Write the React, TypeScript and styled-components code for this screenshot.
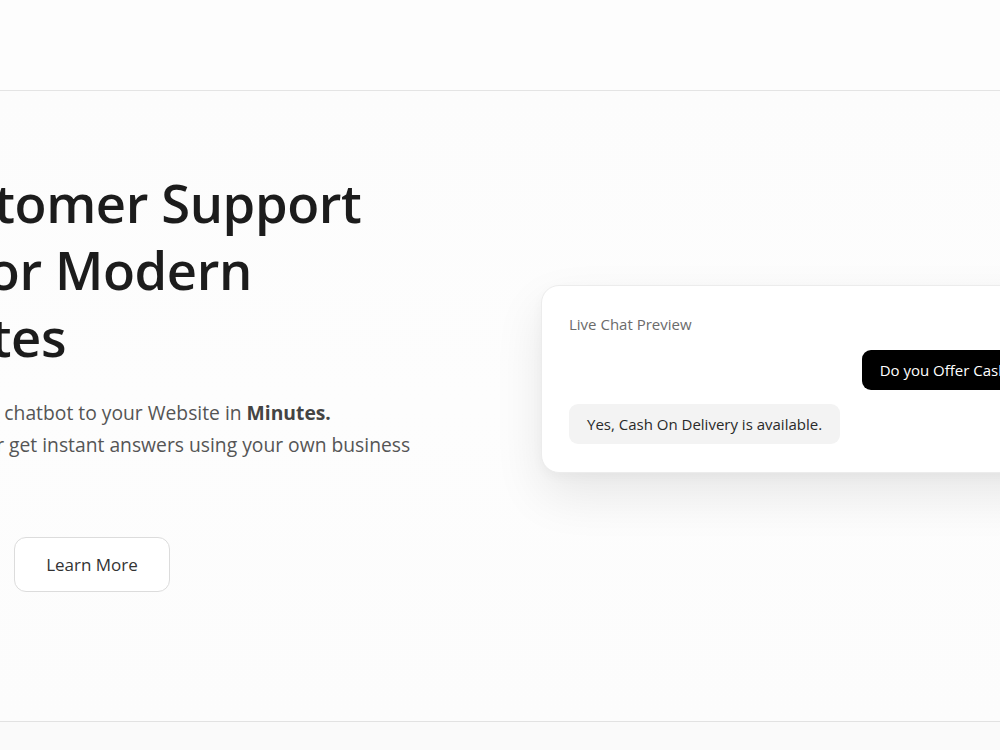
import styled, { createGlobalStyle } from "styled-components";

const GlobalStyle = createGlobalStyle`
  * { box-sizing: border-box; }
  html, body {
    margin: 0;
    padding: 0;
    background: #fafafa;
    font-family: "Open Sans", "Noto Sans", "Liberation Sans", sans-serif;
    color: #1a1a1a;
    overflow: hidden;
  }
`;

const Page = styled.div`
  display: flex;
  flex-direction: column;
  min-height: 100vh;
`;

const TopBar = styled.header`
  height: 91px;
  background: #fdfdfd;
  border-bottom: 1px solid #e4e4e4;
`;

const Hero = styled.section`
  display: flex;
  justify-content: center;
  overflow: hidden;
  background: linear-gradient(180deg, #fcfcfc 0%, #fdfdfd 50%, #fcfcfc 100%);
  border-bottom: 1px solid #e2e2e2;
  padding: 74px 0 129px;
`;

const HeroInner = styled.div`
  flex-shrink: 0;
  width: 1320px;
  padding-right: 15px;
  display: grid;
  grid-template-columns: 1fr 1fr;
  gap: 97px;
  align-items: center;
`;

const Copy = styled.div`
  display: flex;
  flex-direction: column;
`;

const Title = styled.h1`
  margin: 4px 0 0;
  font-size: 52.5px;
  line-height: 67px;
  font-weight: 600;
  letter-spacing: -0.4px;
  color: #1c1c1c;
`;

const Lead = styled.p`
  margin: 27px 0 0;
  font-size: 19.3px;
  line-height: 32px;
  color: #555;

  b {
    color: #444;
    font-weight: 700;
  }
`;

const Actions = styled.div`
  display: flex;
  gap: 20px;
  margin-top: 44px;
`;

const Button = styled.button<{ $primary?: boolean }>`
  height: 55px;
  padding: 0 31px;
  border-radius: 12px;
  font-family: inherit;
  font-size: 17px;
  cursor: pointer;
  border: 1px solid ${(p) => (p.$primary ? "#000" : "#dcdcdc")};
  background: ${(p) => (p.$primary ? "#000" : "#fff")};
  color: ${(p) => (p.$primary ? "#fff" : "#333")};
`;

const ChatCard = styled.div`
  background: #fff;
  border: 1px solid #ececec;
  border-radius: 18px;
  padding: 26px 27px 28px;
  box-shadow: 0 22px 50px rgba(0, 0, 0, 0.09), 0 4px 12px rgba(0, 0, 0, 0.03);
  display: flex;
  flex-direction: column;
  gap: 14px;
`;

const CardLabel = styled.div`
  font-size: 15px;
  line-height: 24px;
  color: #6b6b6b;
`;

const Bubble = styled.div<{ $mine?: boolean }>`
  align-self: ${(p) => (p.$mine ? "flex-end" : "flex-start")};
  padding: 10px 18px;
  border-radius: 9px;
  font-size: 15px;
  line-height: 20px;
  white-space: nowrap;
  background: ${(p) => (p.$mine ? "#000" : "#f3f3f3")};
  color: ${(p) => (p.$mine ? "#fff" : "#2a2a2a")};
`;

const Below = styled.div`
  flex: 1;
  background: #fafafa;
`;

export default function App() {
  return (
    <>
      <GlobalStyle />
      <Page>
        <TopBar />
        <Hero>
          <HeroInner>
            <Copy>
              <Title>
                AI Customer Support
                <br />
                Built for Modern
                <br />
                Websites
              </Title>
              <Lead>
                Add a powerful AI chatbot to your Website in <b>Minutes.</b>
                <br />
                Let your customer get instant answers using your own business
                <br />
                data.
              </Lead>
              <Actions>
                <Button $primary>Get Started</Button>
                <Button>Learn More</Button>
              </Actions>
            </Copy>
            <ChatCard>
              <CardLabel>Live Chat Preview</CardLabel>
              <Bubble $mine>Do you Offer Cash On Delivery?</Bubble>
              <Bubble>Yes, Cash On Delivery is available.</Bubble>
            </ChatCard>
          </HeroInner>
        </Hero>
        <Below />
      </Page>
    </>
  );
}
